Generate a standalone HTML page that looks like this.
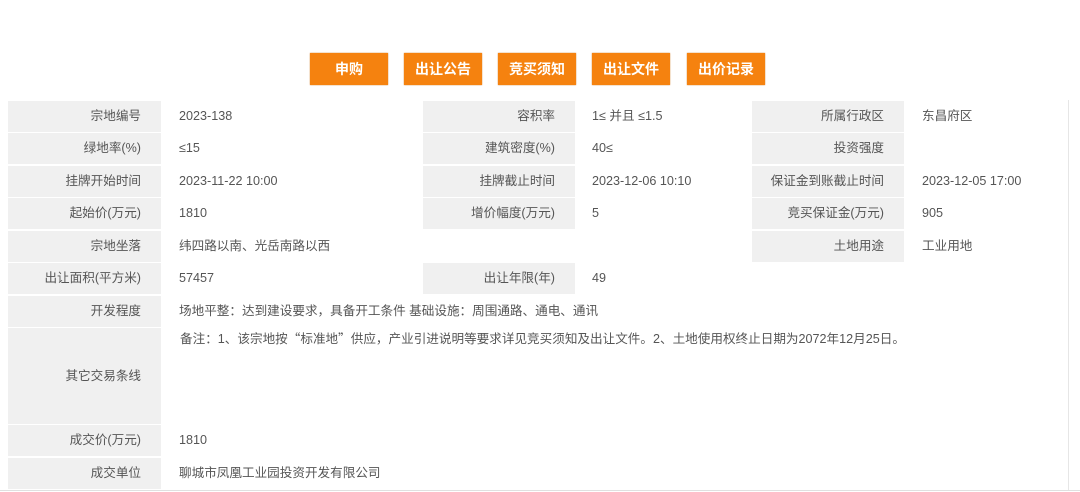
<!DOCTYPE html>
<html><head><meta charset="utf-8"><style>
body{margin:0;background:#fff;width:1080px;height:492px;overflow:hidden;font-family:"Liberation Sans","Noto Sans CJK SC",sans-serif;font-size:12.6px;color:#555;position:relative}
.btn{position:absolute;top:53px;height:32px;width:78px;background:#f5820f;color:#fff;font-size:14px;font-weight:bold;line-height:32px;text-align:center;box-shadow:0 0 1px #c96a0a}
.c{position:absolute;box-sizing:border-box;line-height:31px;white-space:nowrap;overflow:hidden}
.l{background:#f0f0f0;text-align:right;padding-right:20px}
.v{background:#fff;padding-left:17px}
.rb{position:absolute;left:1068px;top:100px;width:1px;height:390px;background:#e6e6e6}
.bb{position:absolute;left:0;top:490px;width:1080px;height:1px;background:#e0e0e0}
.q{font-family:"Noto Sans CJK SC",sans-serif}
</style></head><body>
<div class="btn" style="left:310px">申购</div>
<div class="btn" style="left:404px">出让公告</div>
<div class="btn" style="left:498px">竞买须知</div>
<div class="btn" style="left:592px">出让文件</div>
<div class="btn" style="left:687px">出价记录</div>

<div class="c l" style="left:8px;top:101px;width:153px;height:31px">宗地编号</div>
<div class="c v" style="left:162px;top:101px;width:260px;height:31px">2023-138</div>
<div class="c l" style="left:423px;top:101px;width:152px;height:31px">容积率</div>
<div class="c v" style="left:575px;top:101px;width:176px;height:31px">1≤ 并且 ≤1.5</div>
<div class="c l" style="left:752px;top:101px;width:152px;height:31px">所属行政区</div>
<div class="c v" style="left:905px;top:101px;width:163px;height:31px">东昌府区</div>

<div class="c l" style="left:8px;top:133px;width:153px;height:31px">绿地率(%)</div>
<div class="c v" style="left:162px;top:133px;width:260px;height:31px">≤15</div>
<div class="c l" style="left:423px;top:133px;width:152px;height:31px">建筑密度(%)</div>
<div class="c v" style="left:575px;top:133px;width:176px;height:31px">40≤</div>
<div class="c l" style="left:752px;top:133px;width:152px;height:31px">投资强度</div>
<div class="c v" style="left:905px;top:133px;width:163px;height:31px"></div>

<div class="c l" style="left:8px;top:166px;width:153px;height:31px">挂牌开始时间</div>
<div class="c v" style="left:162px;top:166px;width:260px;height:31px">2023-11-22 10:00</div>
<div class="c l" style="left:423px;top:166px;width:152px;height:31px">挂牌截止时间</div>
<div class="c v" style="left:575px;top:166px;width:176px;height:31px">2023-12-06 10:10</div>
<div class="c l" style="left:752px;top:166px;width:152px;height:31px">保证金到账截止时间</div>
<div class="c v" style="left:905px;top:166px;width:163px;height:31px">2023-12-05 17:00</div>

<div class="c l" style="left:8px;top:198px;width:153px;height:31px">起始价(万元)</div>
<div class="c v" style="left:162px;top:198px;width:260px;height:31px">1810</div>
<div class="c l" style="left:423px;top:198px;width:152px;height:31px">增价幅度(万元)</div>
<div class="c v" style="left:575px;top:198px;width:176px;height:31px">5</div>
<div class="c l" style="left:752px;top:198px;width:152px;height:31px">竞买保证金(万元)</div>
<div class="c v" style="left:905px;top:198px;width:163px;height:31px">905</div>

<div class="c l" style="left:8px;top:231px;width:153px;height:31px">宗地坐落</div>
<div class="c v" style="left:162px;top:231px;width:589px;height:31px">纬四路以南、光岳南路以西</div>
<div class="c l" style="left:752px;top:231px;width:152px;height:31px">土地用途</div>
<div class="c v" style="left:905px;top:231px;width:163px;height:31px">工业用地</div>

<div class="c l" style="left:8px;top:263px;width:153px;height:31px">出让面积(平方米)</div>
<div class="c v" style="left:162px;top:263px;width:260px;height:31px">57457</div>
<div class="c l" style="left:423px;top:263px;width:152px;height:31px">出让年限(年)</div>
<div class="c v" style="left:575px;top:263px;width:493px;height:31px">49</div>

<div class="c l" style="left:8px;top:296px;width:153px;height:31px">开发程度</div>
<div class="c v" style="left:162px;top:296px;width:906px;height:31px">场地平整：达到建设要求，具备开工条件 基础设施：周围通路、通电、通讯</div>

<div class="c l" style="left:8px;top:328px;width:153px;height:96px;line-height:96px">其它交易条线</div>
<div class="c v" style="left:162px;top:328px;width:906px;height:96px;line-height:16px;padding-top:2px;padding-left:18px">备注：1、该宗地按<span class="q">“</span>标准地<span class="q">”</span>供应，产业引进说明等要求详见竞买须知及出让文件。2、土地使用权终止日期为2072年12月25日。</div>

<div class="c l" style="left:8px;top:425px;width:153px;height:31px">成交价(万元)</div>
<div class="c v" style="left:162px;top:425px;width:906px;height:31px">1810</div>
<div class="c l" style="left:8px;top:458px;width:153px;height:31px">成交单位</div>
<div class="c v" style="left:162px;top:458px;width:906px;height:31px">聊城市凤凰工业园投资开发有限公司</div>
<div class="rb"></div><div class="bb"></div>
</body></html>
